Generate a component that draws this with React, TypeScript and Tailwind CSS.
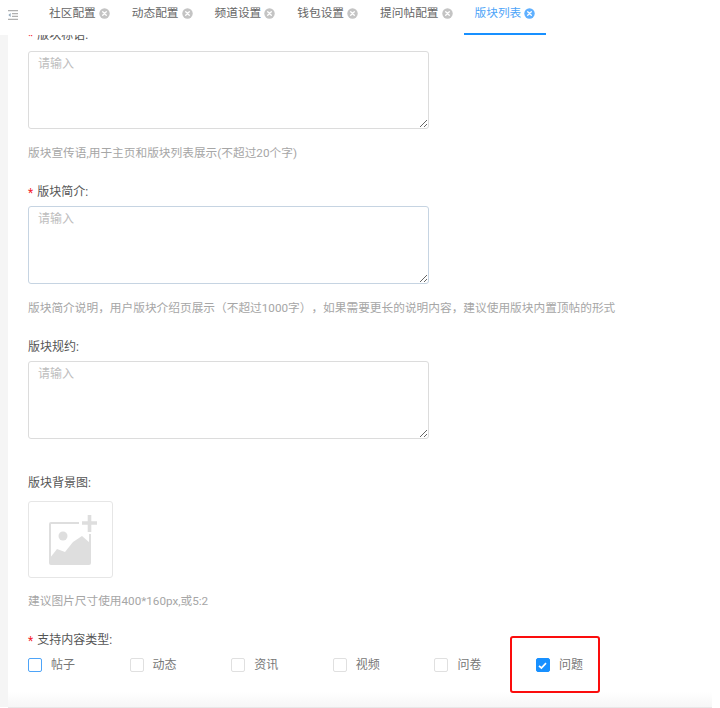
const font = { fontFamily: '"Roboto", "Noto Sans CJK SC", sans-serif' };

const tabs = [
  { name: "社区配置" },
  { name: "动态配置" },
  { name: "频道设置" },
  { name: "钱包设置" },
  { name: "提问帖配置" },
  { name: "版块列表", active: true },
];

const types = [
  { name: "帖子", focus: true },
  { name: "动态" },
  { name: "资讯" },
  { name: "视频" },
  { name: "问卷" },
  { name: "问题", checked: true },
];

function CloseDot({ active }: { active?: boolean }) {
  return (
    <svg viewBox="0 0 11 11" className="ml-[3px] h-[11px] w-[11px]">
      <circle cx="5.5" cy="5.5" r="5.2" fill={active ? "#5fb0ff" : "#c4c4c4"} />
      <path d="M3.7 3.7l3.6 3.6M7.3 3.7l-3.6 3.6" stroke="#fff" strokeWidth="1.3" strokeLinecap="round" />
    </svg>
  );
}

function Label({ text, required }: { text: string; required?: boolean }) {
  return (
    <div className="flex h-[16px] items-center text-[12px] leading-[16px] text-[#555]">
      {required && <span className="mr-[4px] pt-[2px] text-[#f5222d]">*</span>}
      {text}:
    </div>
  );
}

function Area({ focus }: { focus?: boolean }) {
  return (
    <textarea
      placeholder="请输入"
      className={`block h-[78px] w-[401px] resize rounded-[3px] border bg-white px-[9px] py-[4px] text-[12px] leading-[16px] placeholder:text-[#bdbdbd] ${
        focus ? "border-[#c6d4e2]" : "border-[#dcdcdc]"
      }`}
    />
  );
}

function Help({ text }: { text: string }) {
  return (
    <div className="h-[16px] text-[11.7px] leading-[16px] text-[#a6a6a6] [text-spacing-trim:space-all]">{text}</div>
  );
}

export default function App() {
  return (
    <div className="relative h-[708px] w-[720px] overflow-hidden bg-white" style={font}>
      <div className="flex h-[35px] items-stretch bg-white">
        <div className="flex w-[38px] items-center pb-[5px] pl-[8px]">
          <svg viewBox="0 0 10 10" className="h-[10px] w-[10px]" fill="none" stroke="#b0b0b0" strokeWidth="1.2">
            <path d="M0 .6h10M4 3.6h6M4 6.4h6M0 9.4h10" />
            <path d="M2.6 3L.4 5l2.2 2z" fill="#8fa6bb" stroke="none" />
          </svg>
        </div>
        {tabs.map((t) => (
          <div
            key={t.name}
            className={`flex items-center pl-[11px] pr-[11px] text-[11.7px] ${
              t.active ? "border-b-2 border-[#1890ff] pb-[6px] text-[#4ea4f8]" : "pb-[8px] text-[#666]"
            }`}
          >
            {t.name}
            <CloseDot active={t.active} />
          </div>
        ))}
      </div>

      <div className="flex h-[672px]">
        <div className="w-[8px] bg-[#f5f5f5]" />
        <div className="flex-1 overflow-hidden bg-white pl-[20px]">
          <div className="-mt-[8px] flex flex-col">
            <Label text="版块标语" required />
            <div className="mt-[8px]">
              <Area />
            </div>
            <div className="mt-[16px]">
              <Help text="版块宣传语,用于主页和版块列表展示(不超过20个字)" />
            </div>
            <div className="mt-[23px]">
              <Label text="版块简介" required />
            </div>
            <div className="mt-[6px]">
              <Area focus />
            </div>
            <div className="mt-[16px]">
              <Help text="版块简介说明，用户版块介绍页展示（不超过1000字），如果需要更长的说明内容，建议使用版块内置顶帖的形式" />
            </div>
            <div className="mt-[23px]">
              <Label text="版块规约" />
            </div>
            <div className="mt-[6px]">
              <Area />
            </div>
            <div className="mt-[36px]">
              <Label text="版块背景图" />
            </div>
            <div className="mt-[10px] flex h-[77px] w-[85px] items-center justify-center rounded-[3px] border border-[#e6e6e6] bg-white">
              <svg viewBox="0 0 66 64" className="ml-[5px] h-[64px] w-[66px] shrink-0" fill="none">
                <path d="M39 15H11a1 1 0 0 0-1 1v39a1 1 0 0 0 1 1h38a1 1 0 0 0 1-1V26" stroke="#dedede" strokeWidth="2" />
                <circle cx="23" cy="28" r="4.5" fill="#dedede" />
                <path d="M10 50l7-9 8 3 8-10 9-6 8 7v21H10z" fill="#dedede" />
                <path d="M49.5 7v17M42 15h15" stroke="#dedede" strokeWidth="3.6" />
              </svg>
            </div>
            <div className="mt-[15px]">
              <Help text="建议图片尺寸使用400*160px,或5:2" />
            </div>
            <div className="mt-[23px]">
              <Label text="支持内容类型" required />
            </div>
            <div className="mt-[10px] flex">
              {types.map((t) => (
                <div key={t.name} className="flex h-[14px] w-[101.6px] items-center text-[12px] text-[#777]">
                  <span
                    className={`flex h-[14px] w-[14px] items-center justify-center rounded-[2px] border ${
                      t.checked
                        ? "border-[#1890ff] bg-[#1890ff]"
                        : t.focus
                          ? "border-[#4ea4f8] bg-white"
                          : "border-[#e0e0e0] bg-white"
                    }`}
                  >
                    {t.checked && (
                      <svg viewBox="0 0 11 11" className="h-[11px] w-[11px]" fill="none">
                        <path d="M2 5.8l2.4 2.2L9 3.2" stroke="#fff" strokeWidth="1.7" />
                      </svg>
                    )}
                  </span>
                  <span className="ml-[9px]">{t.name}</span>
                </div>
              ))}
            </div>
          </div>
        </div>
      </div>

      {/* red annotation box and the fade at the page bottom */}
      <div className="pointer-events-none absolute inset-x-[8px] bottom-0 h-[16px] border-b border-[#e8e8e8] bg-gradient-to-b from-white to-[#f6f6f6]" />
      <div className="pointer-events-none absolute left-[510px] top-[636px] h-[57px] w-[90px] rounded-[3px] border-[2px] border-[#fb0d0d]" />
    </div>
  );
}
